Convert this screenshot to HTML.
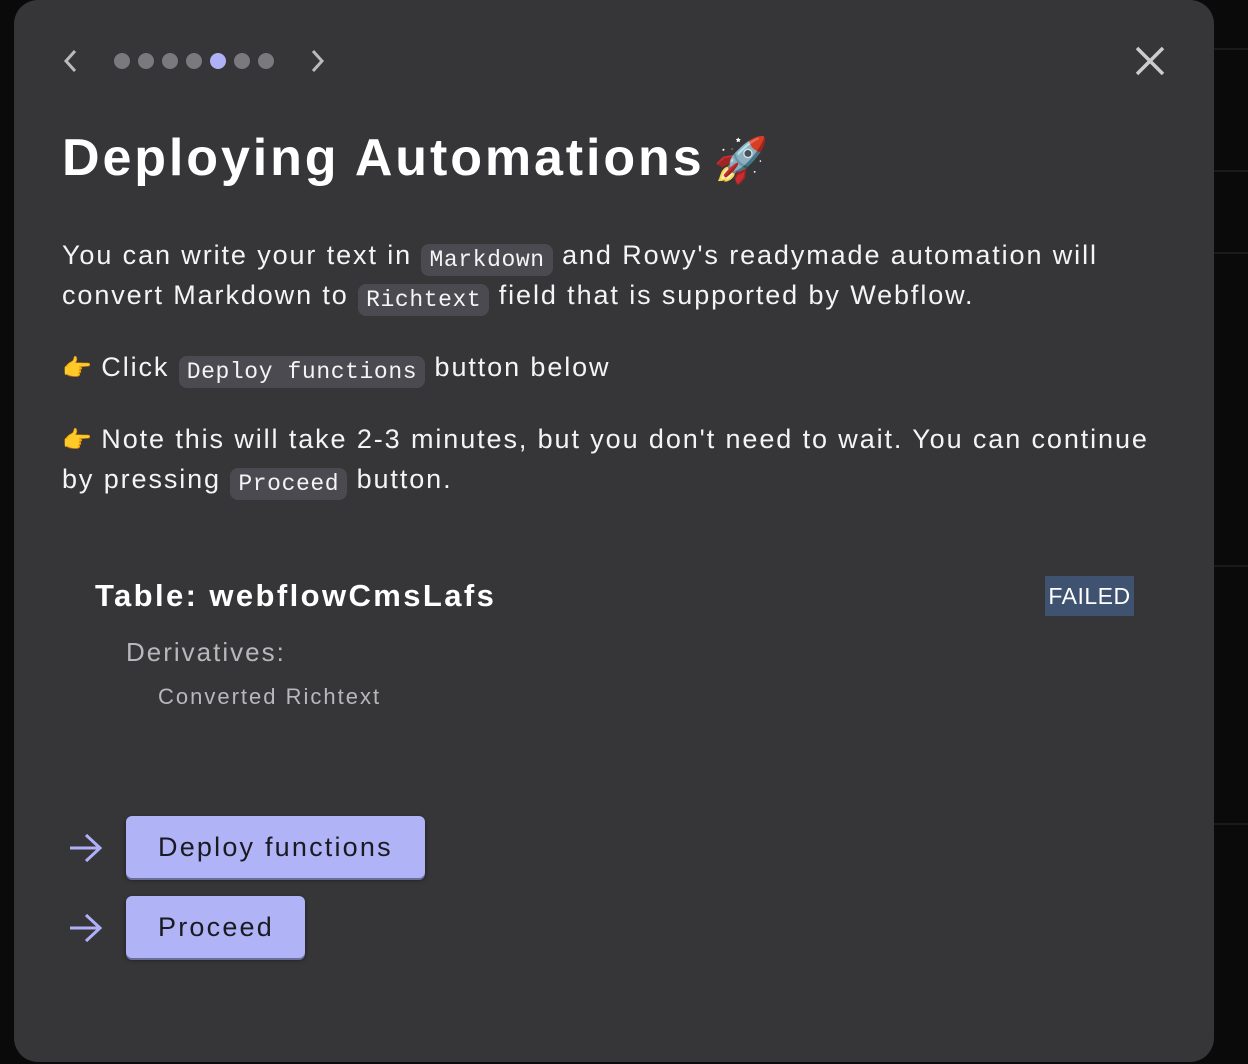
<!DOCTYPE html>
<html><head><meta charset="utf-8"><style>
*{margin:0;padding:0;box-sizing:border-box}
body{width:1248px;height:1064px;background:#0a0a0b;position:relative;overflow:hidden;font-family:"Liberation Sans",sans-serif;color:#fff}
.ln{position:absolute;left:1214px;right:0;height:2px;background:#1a1a1c}
.dlg{position:absolute;left:14px;top:0;width:1200px;height:1062px;background:#363638;border-radius:24px}
.t{position:absolute;left:62px;font-size:27px;letter-spacing:1.9px;white-space:nowrap;color:#f4f4f6}
code{font-family:"Liberation Mono",monospace;font-size:23px;letter-spacing:0.6px;background:#4a4a50;border-radius:8px;padding:3px 8px;position:relative;top:2px}
.dot{position:absolute;top:53px;width:16px;height:16px;border-radius:50%;background:#7a7a7e}
.btn{position:absolute;left:126px;height:62px;background:#b0b3f5;border-radius:6px;box-shadow:0 2px 0 #6a6c9a,0 2px 4px rgba(0,0,0,.5);color:#1a1a22;font-size:27px;letter-spacing:2.2px;line-height:62px;padding:0 32px;white-space:nowrap}
.e{letter-spacing:0;font-size:24px}
</style></head><body>
<div class="ln" style="top:48px"></div><div class="ln" style="top:170px"></div><div class="ln" style="top:252px"></div><div class="ln" style="top:565px"></div><div class="ln" style="top:823px"></div>
<div class="dlg"></div>
<svg style="position:absolute;left:60px;top:48px" width="20" height="26"><path d="M15 3 L6 13 L15 23" stroke="#bbb" stroke-width="3" fill="none"/></svg>
<div class="dot" style="left:114px"></div><div class="dot" style="left:138px"></div><div class="dot" style="left:162px"></div><div class="dot" style="left:186px"></div><div class="dot" style="left:210px;background:#aeb1f5"></div><div class="dot" style="left:234px"></div><div class="dot" style="left:258px"></div>
<svg style="position:absolute;left:308px;top:48px" width="20" height="26"><path d="M5 3 L14 13 L5 23" stroke="#bbb" stroke-width="3" fill="none"/></svg>
<svg style="position:absolute;left:1134px;top:45px" width="32" height="32"><path d="M3 3 L29 29 M29 3 L3 29" stroke="#ccc" stroke-width="3.5"/></svg>
<div class="t" style="top:128px;font-size:52px;letter-spacing:2.9px;font-weight:bold;color:#fff">Deploying Automations <span style="font-size:44px;letter-spacing:0;margin-left:-8px">🚀</span></div>
<div class="t" style="top:240px">You can write your text in <code>Markdown</code> and Rowy's readymade automation will</div>
<div class="t" style="top:280px">convert Markdown to <code>Richtext</code> field that is supported by Webflow.</div>
<div class="t" style="top:352px"><span class="e">👉</span> Click <code>Deploy functions</code> button below</div>
<div class="t" style="top:424px"><span class="e">👉</span> Note this will take 2-3 minutes, but you don't need to wait. You can continue</div>
<div class="t" style="top:464px">by pressing <code>Proceed</code> button.</div>
<div class="t" style="left:95px;top:578px;font-size:31px;font-weight:bold;letter-spacing:2.4px;color:#fff">Table: webflowCmsLafs</div>
<div style="position:absolute;left:1045px;top:576px;width:89px;height:40px;background:#3f5270;color:#fff;font-size:23px;letter-spacing:0.5px;line-height:40px;text-align:center">FAILED</div>
<div class="t" style="left:126px;top:637px;font-size:26px;letter-spacing:2px;color:#b8b8bc">Derivatives:</div>
<div class="t" style="left:158px;top:684px;font-size:22px;letter-spacing:2px;color:#b8b8bc">Converted Richtext</div>
<svg style="position:absolute;left:68px;top:832px" width="36" height="32"><path d="M2 16 H32 M18 3 L32 16 L18 29" stroke="#aeb1f5" stroke-width="3" fill="none"/></svg>
<div class="btn" style="top:816px;width:299px">Deploy functions</div>
<svg style="position:absolute;left:68px;top:912px" width="36" height="32"><path d="M2 16 H32 M18 3 L32 16 L18 29" stroke="#aeb1f5" stroke-width="3" fill="none"/></svg>
<div class="btn" style="top:896px;width:179px">Proceed</div>
</body></html>
